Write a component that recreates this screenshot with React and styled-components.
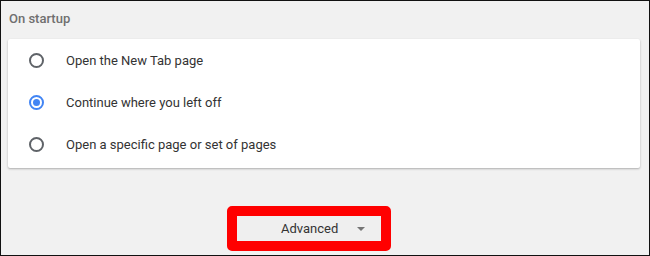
import React, { useState } from 'react';
import styled, { createGlobalStyle } from 'styled-components';

const GlobalStyle = createGlobalStyle`
  body {
    margin: 0;
    font-family: Roboto, "Liberation Sans", sans-serif;
  }
`;

const Page = styled.div`
  box-sizing: border-box;
  width: 650px;
  height: 256px;
  border: 1px solid #111;
  background: #f1f1f1;
  display: flex;
  flex-direction: column;
  padding: 0 9px 0 7px;
`;

const Title = styled.h2`
  margin: 0;
  padding: 10px 0 0 1px;
  height: 38px;
  box-sizing: border-box;
  font-size: 13px;
  font-weight: 500;
  color: #6f6f6f;
`;

const Card = styled.div`
  background: #fff;
  border-radius: 2px;
  box-shadow: 0 1px 2px rgba(0, 0, 0, 0.22), 0 1px 3px rgba(0, 0, 0, 0.08);
  display: flex;
  flex-direction: column;
  padding: 0 0 3px;
`;

const Row = styled.label`
  display: flex;
  align-items: center;
  height: 42px;
  padding-left: 21px;
  gap: 22px;
  font-size: 13px;
  color: #333;
  cursor: pointer;
`;

const Radio = styled.span`
  box-sizing: border-box;
  width: 15px;
  height: 15px;
  border-radius: 50%;
  border: 2px solid ${p => (p.checked ? '#4285f4' : '#5f6368')};
  display: flex;
  align-items: center;
  justify-content: center;
  &::after {
    content: '';
    width: 7px;
    height: 7px;
    border-radius: 50%;
    background: #4285f4;
    display: ${p => (p.checked ? 'block' : 'none')};
  }
`;

const Footer = styled.div`
  flex: 1;
  display: flex;
  justify-content: center;
  align-items: flex-end;
  padding: 0 30px 4px 0;
`;

const Highlight = styled.div`
  border: 10px solid #ff0000;
  border-radius: 5px;
`;

const AdvancedButton = styled.button`
  box-sizing: border-box;
  width: 144px;
  height: 25px;
  border: 0;
  background: #efefef;
  display: flex;
  align-items: center;
  justify-content: flex-start;
  font-family: inherit;
  font-size: 13px;
  color: #333;
  padding: 0 0 0 44px;
`;

const Caret = styled.span`
  width: 0;
  height: 0;
  border-left: 4px solid transparent;
  border-right: 4px solid transparent;
  border-top: 4px solid #757575;
  margin-left: 19px;
  margin-top: 1px;
`;

const options = [
  'Open the New Tab page',
  'Continue where you left off',
  'Open a specific page or set of pages',
];

export default function App() {
  const [selected, setSelected] = useState(1);
  return (
    <>
      <GlobalStyle />
      <Page>
        <Title>On startup</Title>
        <Card>
          {options.map((label, i) => (
            <Row key={label} onClick={() => setSelected(i)}>
              <Radio checked={selected === i} />
              {label}
            </Row>
          ))}
        </Card>
        <Footer>
          <Highlight>
            <AdvancedButton>
              Advanced
              <Caret />
            </AdvancedButton>
          </Highlight>
        </Footer>
      </Page>
    </>
  );
}
